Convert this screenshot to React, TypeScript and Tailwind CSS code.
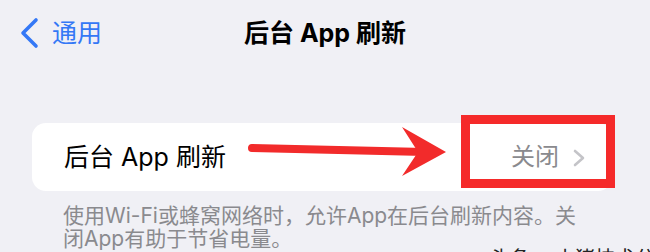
import React from "react";

export default function App() {
  return (
    <div
      className="relative w-[650px] h-[252px] overflow-hidden bg-[#f0f0f5]"
      style={{ fontFamily: '"Inter", "Noto Sans CJK SC", sans-serif' }}
    >
      {/* nav bar */}
      <div className="grid grid-cols-[1fr_auto_1fr] items-center h-[38px] mt-[14px]">
        <div className="flex items-center pl-[19px] text-[#3478f6]">
          <svg width="22" height="34" viewBox="0 0 22 34" className="mr-[11px]">
            <path d="M17 4 L4 17 L17 30" fill="none" stroke="#3478f6" strokeWidth="3.6" strokeLinecap="round" strokeLinejoin="round" />
          </svg>
          <span className="text-[25px] leading-none">通用</span>
        </div>
        <div className="text-[25px] font-bold text-black leading-none">后台 App 刷新</div>
        <div />
      </div>

      {/* card */}
      <div className="ml-[32px] mt-[71px] w-[580px] h-[68px] bg-white rounded-[14px] flex items-center justify-between pl-[32px] pr-[26px]">
        <span className="text-[25px] text-black leading-none">后台 App 刷新</span>
        <div className="flex items-center">
          <span className="text-[24px] text-[#8a8a8e] leading-none">关闭</span>
          <svg width="14" height="20" viewBox="0 0 14 20" className="ml-[13px] mt-[2px]">
            <path d="M3 3 L11 10 L3 17" fill="none" stroke="#c4c4c8" strokeWidth="2.6" strokeLinecap="round" strokeLinejoin="round" />
          </svg>
        </div>
      </div>

      {/* footer */}
      <p className="ml-[63px] mt-[13px] text-[21px] leading-[23px] text-[#8a8a8e] whitespace-nowrap">
        使用Wi-Fi或蜂窝网络时，允许App在后台刷新内容。关
        <br />
        闭App有助于节省电量。
      </p>

      {/* annotation arrow */}
      <svg className="absolute left-0 top-0" width="650" height="252" viewBox="0 0 650 252">
        <line x1="252" y1="148" x2="425" y2="152" stroke="#f22b2b" strokeWidth="8" strokeLinecap="round" />
        <polygon points="402,127 446,152 402,176 418,152" fill="#f22b2b" />
      </svg>

      {/* annotation box */}
      <div className="absolute left-[461px] top-[115px] w-[154px] h-[73px] border-[9px] border-[#f52a2a]" />

      {/* watermark */}
      <div className="absolute left-[490px] top-[249px] text-[20px] text-[#222] whitespace-nowrap leading-none">
        头条 @小猪技术分享
      </div>
    </div>
  );
}
